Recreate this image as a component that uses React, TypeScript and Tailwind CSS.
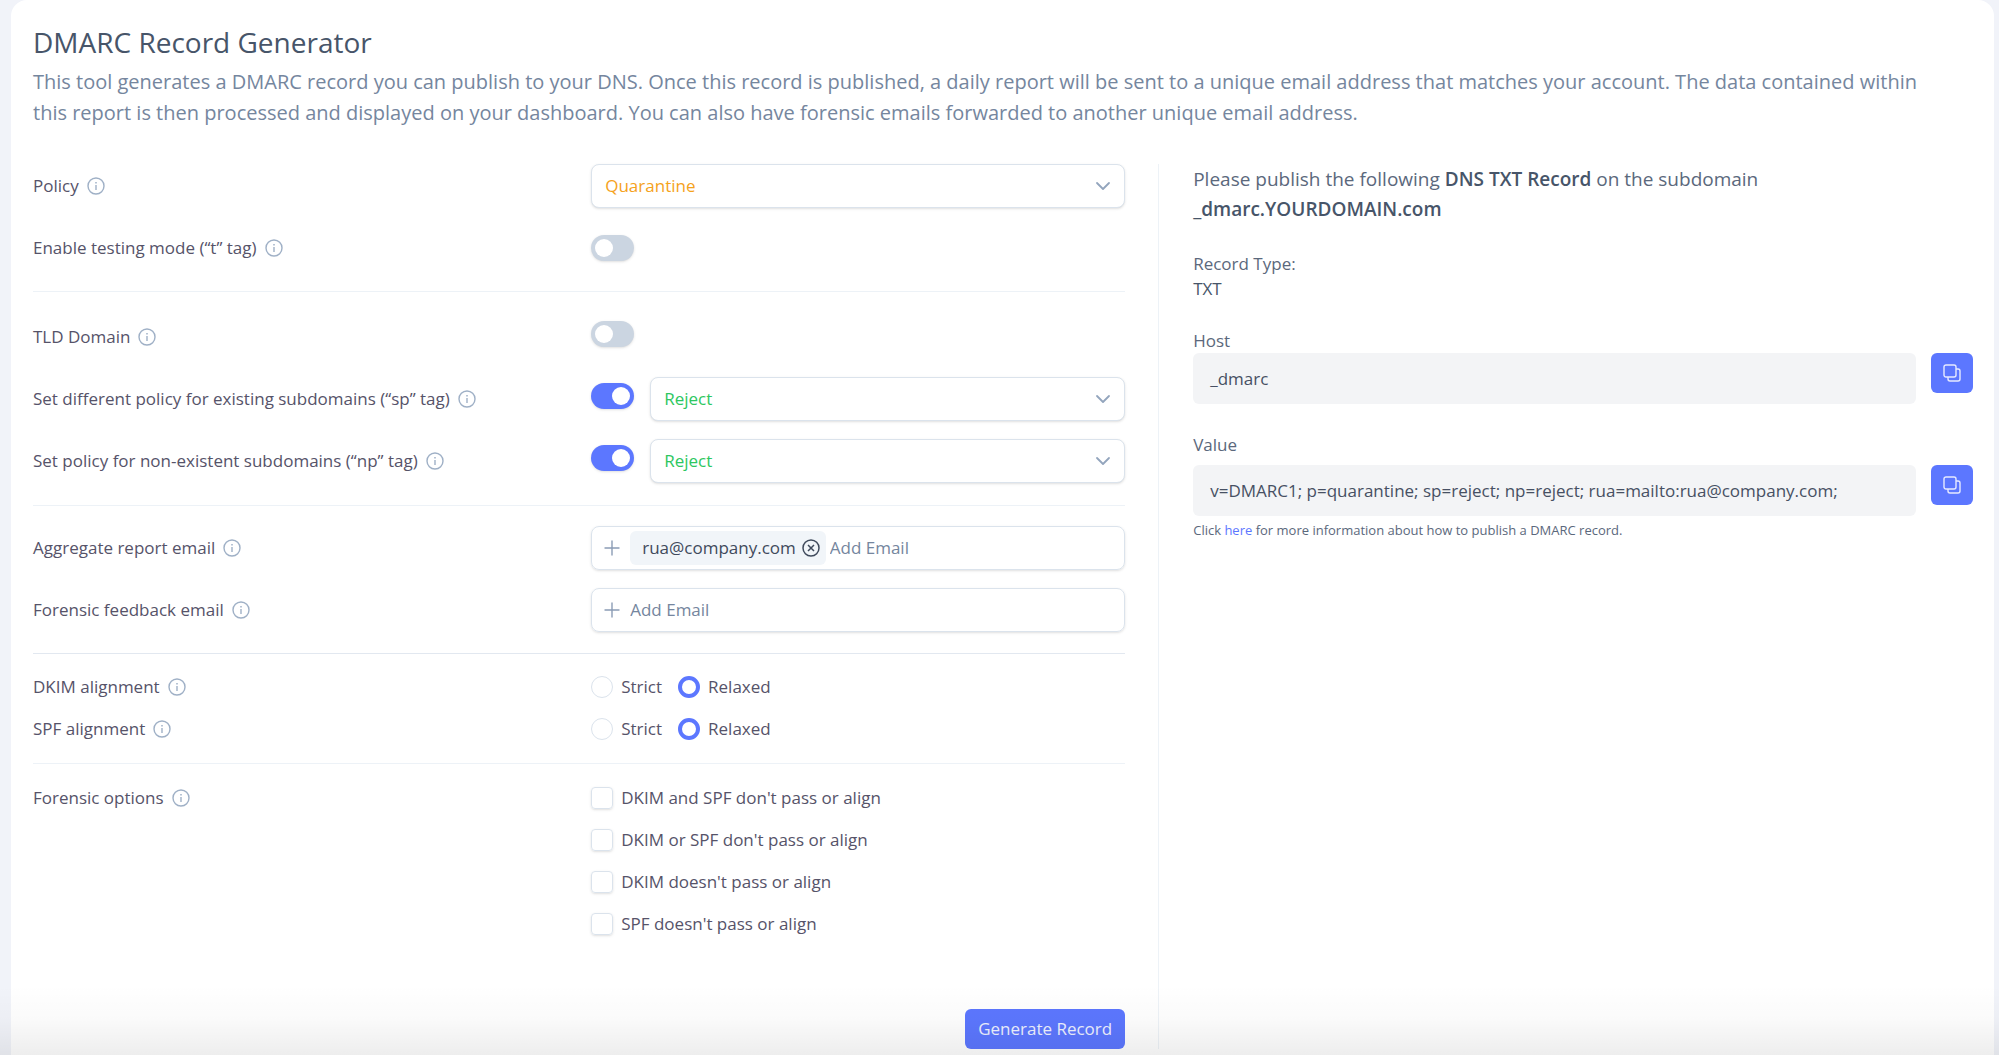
import React, { useState } from "react";
import { ChevronDown, Plus } from "lucide-react";

const POLICY_COLORS: Record<string, string> = {
  none: "text-slate-500",
  quarantine: "text-[#f5a21b]",
  reject: "text-[#2dc75f]",
};

const FORENSIC_OPTIONS = [
  "DKIM and SPF don't pass or align",
  "DKIM or SPF don't pass or align",
  "DKIM doesn't pass or align",
  "SPF doesn't pass or align",
];

function InfoIcon() {
  return (
    <svg viewBox="0 0 18 18" className="h-[18px] w-[18px] shrink-0" fill="none" stroke="#9fb0c6" aria-hidden="true">
      <circle cx="9" cy="9" r="8" strokeWidth="1.4" />
      <path d="M9 8v5" strokeWidth="1.4" />
      <path d="M9 5v1.5" strokeWidth="1.5" />
    </svg>
  );
}

function CopyIcon() {
  return (
    <svg viewBox="0 0 18 18" className="h-[18px] w-[18px]" fill="none" stroke="#e6eaff" strokeWidth="1.4" aria-hidden="true">
      <rect x="1" y="1" width="12" height="12" rx="2" />
      <path d="M13 5h2a2 2 0 0 1 2 2v8a2 2 0 0 1-2 2H7a2 2 0 0 1-2-2v-2" />
    </svg>
  );
}

function RemoveIcon() {
  return (
    <svg viewBox="0 0 18 18" className="h-[18px] w-[18px]" fill="none" stroke="#3f4a5c" strokeWidth="1.5" aria-hidden="true">
      <circle cx="9" cy="9" r="8" />
      <path d="M6 6l6 6M12 6l-6 6" />
    </svg>
  );
}

interface RowProps {
  label: string;
  htmlFor?: string;
  children: React.ReactNode;
}

function Row({ label, htmlFor, children }: RowProps) {
  return (
    <div className="grid grid-cols-[23fr_22fr] items-center">
      <div className="flex items-center gap-2">
        <label htmlFor={htmlFor}>{label}</label>
        <InfoIcon />
      </div>
      <div className="flex h-11 items-center">{children}</div>
    </div>
  );
}

interface ToggleProps {
  id: string;
  checked: boolean;
  onChange: (value: boolean) => void;
  className?: string;
}

function Toggle({ id, checked, onChange, className = "" }: ToggleProps) {
  return (
    <input
      id={id}
      type="checkbox"
      role="switch"
      checked={checked}
      onChange={(e) => onChange(e.target.checked)}
      className={`flex h-[26px] w-[43px] shrink-0 cursor-pointer appearance-none items-center rounded-full bg-[#cbd5e1] px-1 shadow-sm before:block before:h-[18px] before:w-[18px] before:rounded-full before:bg-white checked:justify-end checked:bg-[#5c77ff] ${className}`}
    />
  );
}

interface PolicySelectProps {
  id?: string;
  label?: string;
  value: string;
  onChange: (value: string) => void;
}

function PolicySelect({ id, label, value, onChange }: PolicySelectProps) {
  return (
    <div className="relative flex-1">
      <select
        id={id}
        aria-label={label}
        value={value}
        onChange={(e) => onChange(e.target.value)}
        className={`h-11 w-full cursor-pointer appearance-none rounded-lg border border-[#dbe3ec] bg-white px-[13px] shadow-sm ${POLICY_COLORS[value]}`}
      >
        <option value="none">None</option>
        <option value="quarantine">Quarantine</option>
        <option value="reject">Reject</option>
      </select>
      <ChevronDown className="pointer-events-none absolute right-2.5 top-2.5 h-6 w-6 text-[#93a5bd]" strokeWidth={1.8} />
    </div>
  );
}

interface AlignmentProps {
  name: string;
  label: string;
  value: string;
  onChange: (value: string) => void;
}

function Alignment({ name, label, value, onChange }: AlignmentProps) {
  return (
    <div role="radiogroup" aria-label={label} className="grid h-6 grid-cols-[23fr_22fr] items-center">
      <div className="flex items-center gap-2">
        <span>{label}</span>
        <InfoIcon />
      </div>
      <div className="flex items-center gap-4">
        {["Strict", "Relaxed"].map((option) => (
          <label key={option} className="flex cursor-pointer items-center gap-2">
            <input
              type="radio"
              name={name}
              checked={value === option}
              onChange={() => onChange(option)}
              className="h-[22px] w-[22px] appearance-none rounded-full border border-[#dbe3ec] checked:border-4 checked:border-[#5c77ff]"
            />
            {option}
          </label>
        ))}
      </div>
    </div>
  );
}

function CopyField({ label, value }: { label: string; value: string }) {
  return (
    <div className="flex items-start gap-[15px]">
      <div className="flex min-h-[51px] flex-1 items-center rounded-md bg-[#f3f4f6] px-[17px] text-[#475063]">{value}</div>
      <button
        type="button"
        aria-label={label}
        onClick={() => navigator.clipboard?.writeText(value)}
        className="flex h-10 w-[42px] cursor-pointer items-center justify-center rounded-md bg-[#5c77ff]"
      >
        <CopyIcon />
      </button>
    </div>
  );
}

export default function App() {
  const [policy, setPolicy] = useState("quarantine");
  const [testing, setTesting] = useState(false);
  const [tld, setTld] = useState(false);
  const [spEnabled, setSpEnabled] = useState(true);
  const [sp, setSp] = useState("reject");
  const [npEnabled, setNpEnabled] = useState(true);
  const [np, setNp] = useState("reject");
  const [emails, setEmails] = useState(["rua@company.com"]);
  const [dkim, setDkim] = useState("Relaxed");
  const [spf, setSpf] = useState("Relaxed");

  const record = [
    "v=DMARC1",
    `p=${policy}`,
    spEnabled && `sp=${sp}`,
    npEnabled && `np=${np}`,
    emails.length > 0 && `rua=${emails.map((e) => `mailto:${e}`).join(",")}`,
  ]
    .filter(Boolean)
    .join("; ");

  return (
    <div className="relative min-h-screen bg-[#f1f3f9] pl-[11px] pr-[5px] font-['Open_Sans',sans-serif] text-[17px] leading-6 text-[#565369]">
      <main className="min-h-screen rounded-t-2xl bg-white pb-1 pl-[22px] pr-[21px] pt-6">
        <h1 className="text-[28px] leading-9 text-[#475569]">DMARC Record Generator</h1>
        <p className="mt-1.5 pr-6 text-[20px] leading-[31px] text-[#75869e]">
          This tool generates a DMARC record you can publish to your DNS. Once this record is published, a daily report
          will be sent to a unique email address that matches your account. The data contained within this report is then
          processed and displayed on your dashboard. You can also have forensic emails forwarded to another unique email
          address.
        </p>

        <div className="mt-9 flex">
          <form className="w-[58%] pr-[33px]" onSubmit={(e) => e.preventDefault()}>
            {/* Domain policy */}
            <div className="flex flex-col gap-[18px] border-b border-[#edf2f7] pb-[21px]">
              <Row label="Policy" htmlFor="policy">
                <PolicySelect id="policy" value={policy} onChange={setPolicy} />
              </Row>
              <Row label="Enable testing mode (“t” tag)" htmlFor="testing">
                <Toggle id="testing" checked={testing} onChange={setTesting} />
              </Row>
            </div>

            {/* Subdomains */}
            <div className="flex flex-col gap-[18px] border-b border-[#edf2f7] pb-[22px] pt-[23px]">
              <Row label="TLD Domain" htmlFor="tld">
                <Toggle id="tld" checked={tld} onChange={setTld} className="mb-1.5" />
              </Row>
              <Row label="Set different policy for existing subdomains (“sp” tag)" htmlFor="sp">
                <Toggle id="sp" checked={spEnabled} onChange={setSpEnabled} className="mb-1.5 mr-4" />
                {spEnabled && <PolicySelect label="Existing subdomains policy" value={sp} onChange={setSp} />}
              </Row>
              <Row label="Set policy for non-existent subdomains (“np” tag)" htmlFor="np">
                <Toggle id="np" checked={npEnabled} onChange={setNpEnabled} className="mb-1.5 mr-4" />
                {npEnabled && <PolicySelect label="Non-existent subdomains policy" value={np} onChange={setNp} />}
              </Row>
            </div>

            {/* Report addresses */}
            <div className="flex flex-col gap-[18px] border-b border-[#e2e8f0] pb-[21px] pt-5">
              <Row label="Aggregate report email" htmlFor="rua">
                <div className="flex h-11 w-full items-center rounded-lg border border-[#dbe3ec] pl-2 shadow-sm">
                  <Plus className="mr-1.5 h-6 w-6 shrink-0 text-[#8b9cb5]" strokeWidth={1.4} />
                  {emails.map((email) => (
                    <span key={email} className="mr-1 flex h-[34px] items-center gap-1.5 rounded-md bg-[#f1f5f9] pl-3 pr-1.5 text-[#3f4a5c]">
                      {email}
                      <button
                        type="button"
                        aria-label={`Remove ${email}`}
                        onClick={() => setEmails(emails.filter((e) => e !== email))}
                        className="cursor-pointer"
                      >
                        <RemoveIcon />
                      </button>
                    </span>
                  ))}
                  <input id="rua" type="email" placeholder="Add Email" className="min-w-0 flex-1 outline-none placeholder:text-[#75869e]" />
                </div>
              </Row>
              <Row label="Forensic feedback email" htmlFor="ruf">
                <div className="flex h-11 w-full items-center rounded-lg border border-[#dbe3ec] pl-2 shadow-sm">
                  <Plus className="mr-1.5 h-6 w-6 shrink-0 text-[#8b9cb5]" strokeWidth={1.4} />
                  <input id="ruf" type="email" placeholder="Add Email" className="min-w-0 flex-1 outline-none placeholder:text-[#75869e]" />
                </div>
              </Row>
            </div>

            {/* Alignment */}
            <div className="flex flex-col gap-[18px] border-b border-[#edf2f7] pb-[22px] pt-[21px]">
              <Alignment name="dkim" label="DKIM alignment" value={dkim} onChange={setDkim} />
              <Alignment name="spf" label="SPF alignment" value={spf} onChange={setSpf} />
            </div>

            <div role="group" aria-label="Forensic options" className="grid grid-cols-[23fr_22fr] items-start pt-[22px]">
              <div className="flex h-6 items-center gap-2">
                <span>Forensic options</span>
                <InfoIcon />
              </div>
              <div className="flex flex-col gap-[18px]">
                {FORENSIC_OPTIONS.map((option) => (
                  <label key={option} className="flex h-6 cursor-pointer items-center gap-2">
                    <input
                      type="checkbox"
                      className="h-[22px] w-[22px] appearance-none rounded border border-[#dbe3ec] shadow-sm checked:border-[#5c77ff] checked:bg-[#5c77ff]"
                    />
                    {option}
                  </label>
                ))}
              </div>
            </div>

            <div className="mt-[73px] flex justify-end">
              <button type="submit" className="h-10 cursor-pointer rounded-md bg-[#5c77ff] px-[13px] text-[#eef1ff]">
                Generate Record
              </button>
            </div>
          </form>

          <section className="flex-1 border-l border-[#edf2f7] pl-[34px] text-[#5b687c]">
            <p className="text-[19px] leading-[30px]">
              Please publish the following <strong className="font-semibold text-[#475569]">DNS TXT Record</strong> on the
              subdomain
              <br />
              <strong className="font-semibold text-[#475569]">_dmarc.YOURDOMAIN.com</strong>
            </p>

            <p className="mt-[27px] leading-[25px]">
              Record Type:
              <br />
              <span className="text-[#475569]">TXT</span>
            </p>

            <h2 className="mt-[27px] leading-[25px]">Host</h2>
            <CopyField label="Copy host" value="_dmarc" />

            <h2 className="mb-2 mt-7 leading-[25px]">Value</h2>
            <CopyField label="Copy value" value={`${record};`} />

            <p className="mt-1 text-[13px] leading-5">
              Click{" "}
              <a href="#" className="text-[#5c77ff]">
                here
              </a>{" "}
              for more information about how to publish a DMARC record.
            </p>
          </section>
        </div>
      </main>

      {/* Fade along the bottom edge */}
      <div className="pointer-events-none absolute inset-x-0 bottom-0 h-[70px] bg-linear-to-b from-transparent via-black/2 to-black/7" />
    </div>
  );
}
